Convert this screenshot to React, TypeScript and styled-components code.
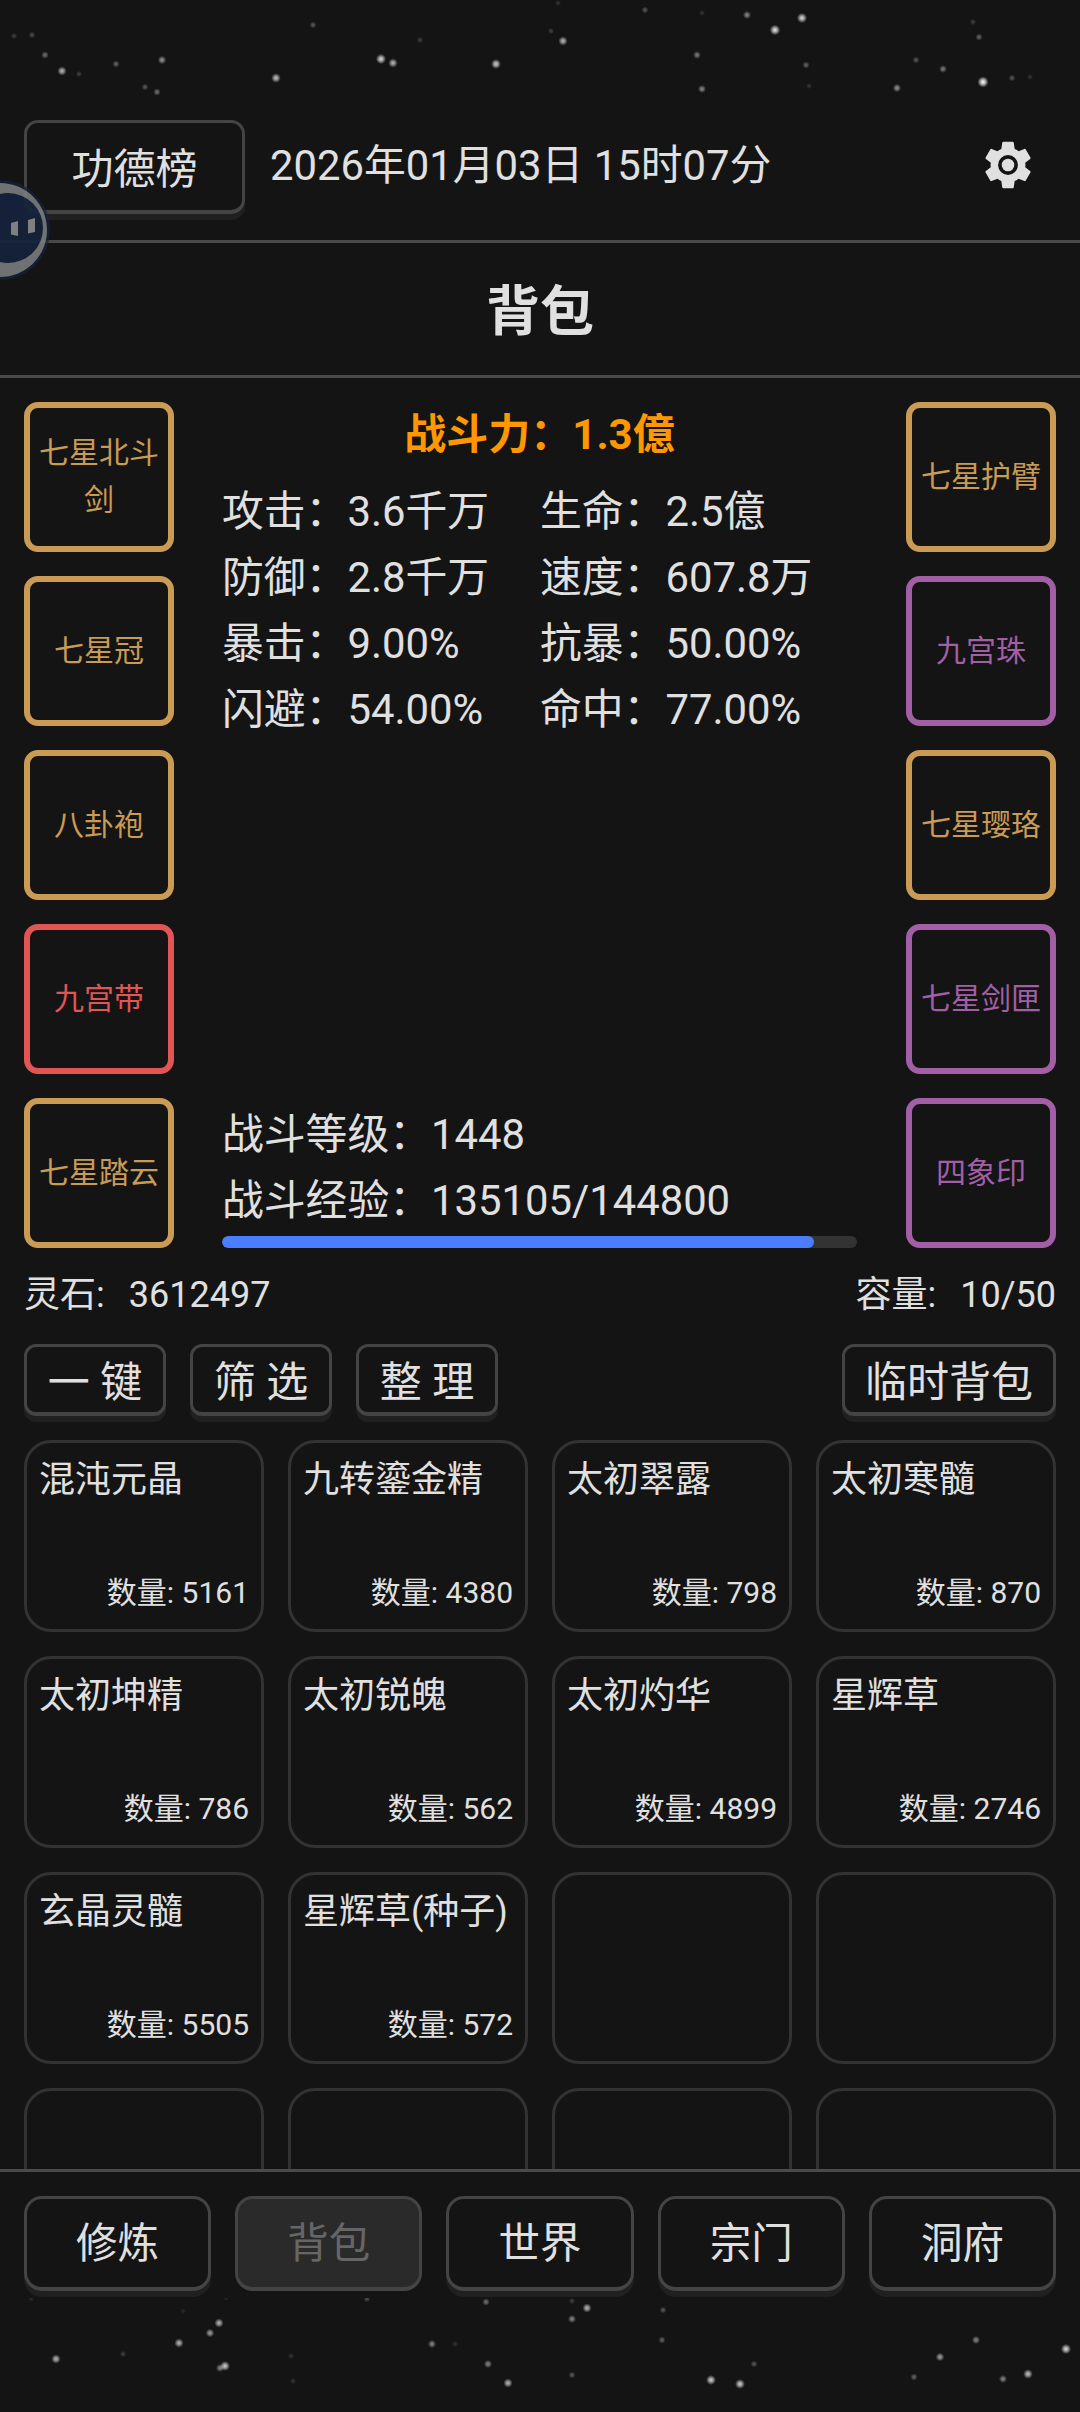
import styled, { createGlobalStyle, css } from "styled-components";

type Star = [number, number, number];
type Rarity = "gold" | "purple" | "red";

const rarityColors: Record<Rarity, string> = {
  gold: "#c99b55",
  purple: "#a25fa5",
  red: "#e25555",
};

const topStars: Star[] = [
  [14, 36, 0.2], [32, 35, 0.25], [45, 55, 0.4], [62, 71, 0.7], [79, 74, 0.2],
  [116, 64, 0.35], [162, 60, 0.55], [145, 87, 0.3], [157, 92, 0.4], [276, 78, 0.75],
  [313, 25, 0.3], [381, 59, 0.85], [393, 63, 0.7], [420, 40, 0.2], [496, 64, 0.8],
  [563, 41, 0.7], [551, 31, 0.2], [558, 3, 0.15], [645, 10, 0.3], [697, 55, 0.45],
  [702, 13, 0.15], [702, 89, 0.5], [747, 15, 0.5], [775, 30, 0.9], [802, 18, 0.85],
  [806, 65, 0.35], [809, 86, 0.15], [897, 88, 0.55], [916, 60, 0.3], [943, 69, 0.45],
  [973, 22, 0.2], [979, 37, 0.35], [983, 82, 1], [1012, 78, 0.3], [1030, 77, 0.15],
];

const bottomStars: Star[] = [
  [31, 1, 0.1], [226, 0, 0.1], [367, 1, 0.25], [486, 4, 0.4], [572, 3, 0.2],
  [587, 10, 0.7], [663, 12, 0.3], [572, 21, 0.5], [183, 13, 0.1], [219, 25, 0.7],
  [210, 35, 0.6], [179, 45, 0.7], [432, 46, 0.5], [455, 46, 0.15], [662, 42, 0.35],
  [976, 42, 0.5], [1066, 51, 0.85], [56, 61, 0.7], [123, 56, 0.2], [940, 59, 0.6],
  [291, 58, 0.15], [488, 66, 0.5], [754, 66, 0.3], [225, 68, 0.8], [220, 70, 0.5],
  [914, 79, 0.35], [1028, 76, 0.75], [1003, 81, 0.5], [572, 77, 0.3], [711, 82, 0.8],
  [508, 85, 0.7], [740, 86, 0.8], [293, 83, 0.15],
];

const leftGear: { name: string; rarity: Rarity }[] = [
  { name: "七星北斗剑", rarity: "gold" },
  { name: "七星冠", rarity: "gold" },
  { name: "八卦袍", rarity: "gold" },
  { name: "九宫带", rarity: "red" },
  { name: "七星踏云", rarity: "gold" },
];

const rightGear: { name: string; rarity: Rarity }[] = [
  { name: "七星护臂", rarity: "gold" },
  { name: "九宫珠", rarity: "purple" },
  { name: "七星璎珞", rarity: "gold" },
  { name: "七星剑匣", rarity: "purple" },
  { name: "四象印", rarity: "purple" },
];

const stats = [
  ["攻击", "3.6千万"], ["生命", "2.5億"],
  ["防御", "2.8千万"], ["速度", "607.8万"],
  ["暴击", "9.00%"], ["抗暴", "50.00%"],
  ["闪避", "54.00%"], ["命中", "77.00%"],
];

const items: ({ name: string; count: number } | null)[] = [
  { name: "混沌元晶", count: 5161 },
  { name: "九转鎏金精", count: 4380 },
  { name: "太初翠露", count: 798 },
  { name: "太初寒髓", count: 870 },
  { name: "太初坤精", count: 786 },
  { name: "太初锐魄", count: 562 },
  { name: "太初灼华", count: 4899 },
  { name: "星辉草", count: 2746 },
  { name: "玄晶灵髓", count: 5505 },
  { name: "星辉草(种子)", count: 572 },
  null, null, null, null, null, null,
];

const tabs = ["修炼", "背包", "世界", "宗门", "洞府"];

const StarField = ({ stars, height }: { stars: Star[]; height: number }) => (
  <StarSvg width={1080} height={height} viewBox={`0 0 1080 ${height}`}>
    <defs>
      <radialGradient id="starGlow">
        <stop offset="0%" stopColor="#fff" />
        <stop offset="40%" stopColor="#f0f0f0" stopOpacity={0.75} />
        <stop offset="100%" stopColor="#ddd" stopOpacity={0} />
      </radialGradient>
    </defs>
    {stars.map(([x, y, o], i) => (
      <circle key={i} cx={x} cy={y} r={2.6 + o * 3} fill="url(#starGlow)" opacity={o} />
    ))}
  </StarSvg>
);

const GearIcon = () => (
  <GearSvg viewBox="0 0 24 24" width={58} height={58}>
    <path
      fill="#e0e0e0"
      d="M19.14 12.94c.04-.3.06-.61.06-.94 0-.32-.02-.64-.07-.94l2.03-1.58c.18-.14.23-.41.12-.61l-1.92-3.32c-.12-.22-.37-.29-.59-.22l-2.39.96c-.5-.38-1.03-.7-1.62-.94l-.36-2.54c-.04-.24-.24-.41-.48-.41h-3.84c-.24 0-.43.17-.47.41l-.36 2.54c-.59.24-1.13.57-1.62.94l-2.39-.96c-.22-.08-.47 0-.59.22L2.74 8.87c-.12.21-.08.47.12.61l2.03 1.58c-.05.3-.09.63-.09.94s.02.64.07.94l-2.03 1.58c-.18.14-.23.41-.12.61l1.92 3.32c.12.22.37.29.59.22l2.39-.96c.5.38 1.03.7 1.62.94l.36 2.54c.05.24.24.41.48.41h3.84c.24 0 .44-.17.47-.41l.36-2.54c.59-.24 1.13-.56 1.62-.94l2.39.96c.22.08.47 0 .59-.22l1.92-3.32c.12-.22.07-.47-.12-.61l-2.01-1.58z"
    />
    <circle cx="12" cy="12" r="4.1" fill="#141414" />
    <circle cx="12" cy="12" r="2.6" fill="#e0e0e0" />
  </GearSvg>
);

const FloatingBall = () => (
  <BallSvg viewBox="0 0 52 104" width={52} height={104}>
    <circle cx="0" cy="52" r="50" fill="#14233d" opacity={0.75} />
    <circle cx="0" cy="52" r="47" fill="#8a8a8a" opacity={0.85} />
    <circle cx="8" cy="50" r="35" fill="#14233d" />
    <path d="M11 45l7-2v15l-7-1.5z" fill="#8a8a8a" />
    <path d="M28 42l7-2v14l-7 1.5z" fill="#8a8a8a" />
  </BallSvg>
);

const App = () => {
  return (
    <Page>
      <GlobalStyle />
      <FloatingBall />
      <StarField stars={topStars} height={120} />

      <Header>
        <HeaderButton>功德榜</HeaderButton>
        <DateText>2026年01月03日 15时07分</DateText>
        <GearIcon />
      </Header>

      <Title>背包</Title>

      <Content>
        <Equipment>
          <GearColumn>
            {leftGear.map((g) => (
              <GearSlot key={g.name} rarity={g.rarity}>{g.name}</GearSlot>
            ))}
          </GearColumn>

          <Center>
            <div>
              <Power>战斗力：1.3億</Power>
              <StatGrid>
                {stats.map(([label, value]) => (
                  <Stat key={label}>{label}：{value}</Stat>
                ))}
              </StatGrid>
            </div>
            <div>
              <Stat>战斗等级：1448</Stat>
              <Stat>战斗经验：135105/144800</Stat>
              <ExpTrack>
                <ExpFill style={{ width: `${(135105 / 144800) * 100}%` }} />
              </ExpTrack>
            </div>
          </Center>

          <GearColumn>
            {rightGear.map((g) => (
              <GearSlot key={g.name} rarity={g.rarity}>{g.name}</GearSlot>
            ))}
          </GearColumn>
        </Equipment>

        <InfoRow>
          <span>灵石:<InfoValue>3612497</InfoValue></span>
          <span>容量:<InfoValue>10/50</InfoValue></span>
        </InfoRow>

        <Toolbar>
          <ToolButton>一 键</ToolButton>
          <ToolButton>筛 选</ToolButton>
          <ToolButton>整 理</ToolButton>
          <ToolSpacer />
          <ToolButton>临时背包</ToolButton>
        </Toolbar>

        <ItemGrid>
          {items.map((item, i) => (
            <ItemCell key={i}>
              {item && (
                <>
                  <ItemName>{item.name}</ItemName>
                  <ItemCount>数量: {item.count}</ItemCount>
                </>
              )}
            </ItemCell>
          ))}
        </ItemGrid>
      </Content>

      <Nav>
        {tabs.map((tab) => (
          <NavButton key={tab} active={tab === "背包"}>{tab}</NavButton>
        ))}
      </Nav>

      <StarField stars={bottomStars} height={114} />
    </Page>
  );
};

export default App;

const GlobalStyle = createGlobalStyle`
  html, body {
    margin: 0;
    padding: 0;
    background: #141414;
  }
  * {
    box-sizing: border-box;
  }
`;

const Page = styled.div`
  position: relative;
  width: 1080px;
  height: 2412px;
  display: flex;
  flex-direction: column;
  overflow: hidden;
  background: #141414;
  color: #e0e0e0;
  font-family: Roboto, "Noto Sans CJK SC", sans-serif;
`;

const StarSvg = styled.svg`
  display: block;
  flex-shrink: 0;
`;

const BallSvg = styled.svg`
  position: absolute;
  left: 0;
  top: 178px;
  z-index: 5;
  opacity: 0.92;
`;

const GearSvg = styled.svg`
  display: block;
  margin: 16px 43px 0 0;
`;

const Header = styled.div`
  height: 123px;
  flex-shrink: 0;
  display: flex;
  align-items: flex-start;
  padding: 0 0 0 24px;
  border-bottom: 3px solid #4a4a4a;
`;

const HeaderButton = styled.div`
  width: 221px;
  height: 94px;
  display: flex;
  align-items: center;
  justify-content: center;
  padding-bottom: 2px;
  border: 3px solid #444;
  border-bottom-width: 4px;
  border-radius: 14px;
  box-shadow: 0 6px 0 #202020;
  font-size: 42px;
`;

const DateText = styled.div`
  flex: 1;
  margin-left: 25px;
  line-height: 92px;
  font-size: 41.8px;
`;

const Title = styled.div`
  height: 135px;
  flex-shrink: 0;
  display: flex;
  align-items: center;
  justify-content: center;
  padding-bottom: 3px;
  border-bottom: 3px solid #4a4a4a;
  font-size: 54px;
  font-weight: 700;
`;

const Content = styled.div`
  flex: 1;
  min-height: 0;
  overflow: hidden;
  padding: 24px 24px 0;
`;

const Equipment = styled.div`
  display: flex;
  justify-content: space-between;
`;

const GearColumn = styled.div`
  width: 150px;
  display: flex;
  flex-direction: column;
  gap: 24px;
`;

const GearSlot = styled.div<{ rarity: Rarity }>(
  ({ rarity }) => css`
    height: 150px;
    display: flex;
    align-items: center;
    justify-content: center;
    padding: 0 8px 2px;
    text-align: center;
    border: 6px solid ${rarityColors[rarity]};
    border-radius: 14px;
    color: ${rarityColors[rarity]};
    font-size: 30px;
    line-height: 47px;
  `
);

const Center = styled.div`
  flex: 1;
  display: flex;
  flex-direction: column;
  justify-content: space-between;
  padding: 0 49px 0 48px;
`;

const Power = styled.div`
  height: 57px;
  display: flex;
  align-items: center;
  justify-content: center;
  color: #ff9800;
  font-size: 42px;
  font-weight: 700;
`;

const StatGrid = styled.div`
  display: grid;
  grid-template-columns: 318px 1fr;
  margin-top: 20px;
`;

const Stat = styled.div`
  font-size: 41.8px;
  line-height: 66px;
  white-space: nowrap;
`;

const ExpTrack = styled.div`
  height: 12px;
  margin-top: 2px;
  border-radius: 6px;
  overflow: hidden;
  background: #333;
`;

const ExpFill = styled.div`
  height: 100%;
  border-radius: 6px;
  background: #4a7dff;
`;

const InfoRow = styled.div`
  display: flex;
  justify-content: space-between;
  margin-top: 24px;
  height: 47px;
  line-height: 47px;
  font-size: 36px;
`;

const InfoValue = styled.span`
  margin-left: 24px;
`;

const Toolbar = styled.div`
  display: flex;
  gap: 24px;
  margin-top: 25px;
`;

const ToolSpacer = styled.div`
  flex: 1;
`;

const ToolButton = styled.div`
  height: 72px;
  min-width: 142px;
  padding: 0 20px 2px;
  display: flex;
  align-items: center;
  justify-content: center;
  border: 3px solid #444;
  border-bottom-width: 4px;
  border-radius: 12px;
  box-shadow: 0 6px 0 #202020;
  font-size: 42px;
  white-space: pre;

  &:nth-child(-n + 3) {
    width: 142px;
    padding: 0 0 2px;
  }
`;

const ItemGrid = styled.div`
  display: grid;
  grid-template-columns: repeat(4, 1fr);
  gap: 24px;
  margin-top: 24px;
`;

const ItemCell = styled.div`
  height: 192px;
  display: flex;
  flex-direction: column;
  justify-content: space-between;
  padding: 15px 12px 16px 12px;
  border: 3px solid #333;
  border-radius: 27px;
`;

const ItemName = styled.div`
  font-size: 36px;
  line-height: 44px;
  white-space: nowrap;
`;

const ItemCount = styled.div`
  text-align: right;
  font-size: 30px;
  line-height: 40px;
`;

const Nav = styled.div`
  flex-shrink: 0;
  display: flex;
  gap: 24px;
  padding: 24px 24px 7px;
  border-top: 3px solid #4a4a4a;
`;

const NavButton = styled.div<{ active: boolean }>(
  ({ active }) => css`
    flex: 1;
    height: 95px;
    display: flex;
    align-items: center;
    justify-content: center;
    padding-bottom: 6px;
    border: 3px solid #444;
    border-bottom-width: 4px;
    border-radius: 18px;
    background: ${active ? "#2a2a2a" : "transparent"};
    box-shadow: ${active ? "none" : "0 6px 0 #202020"};
    color: ${active ? "#666" : "#e0e0e0"};
    font-size: 41.5px;
  `
);
